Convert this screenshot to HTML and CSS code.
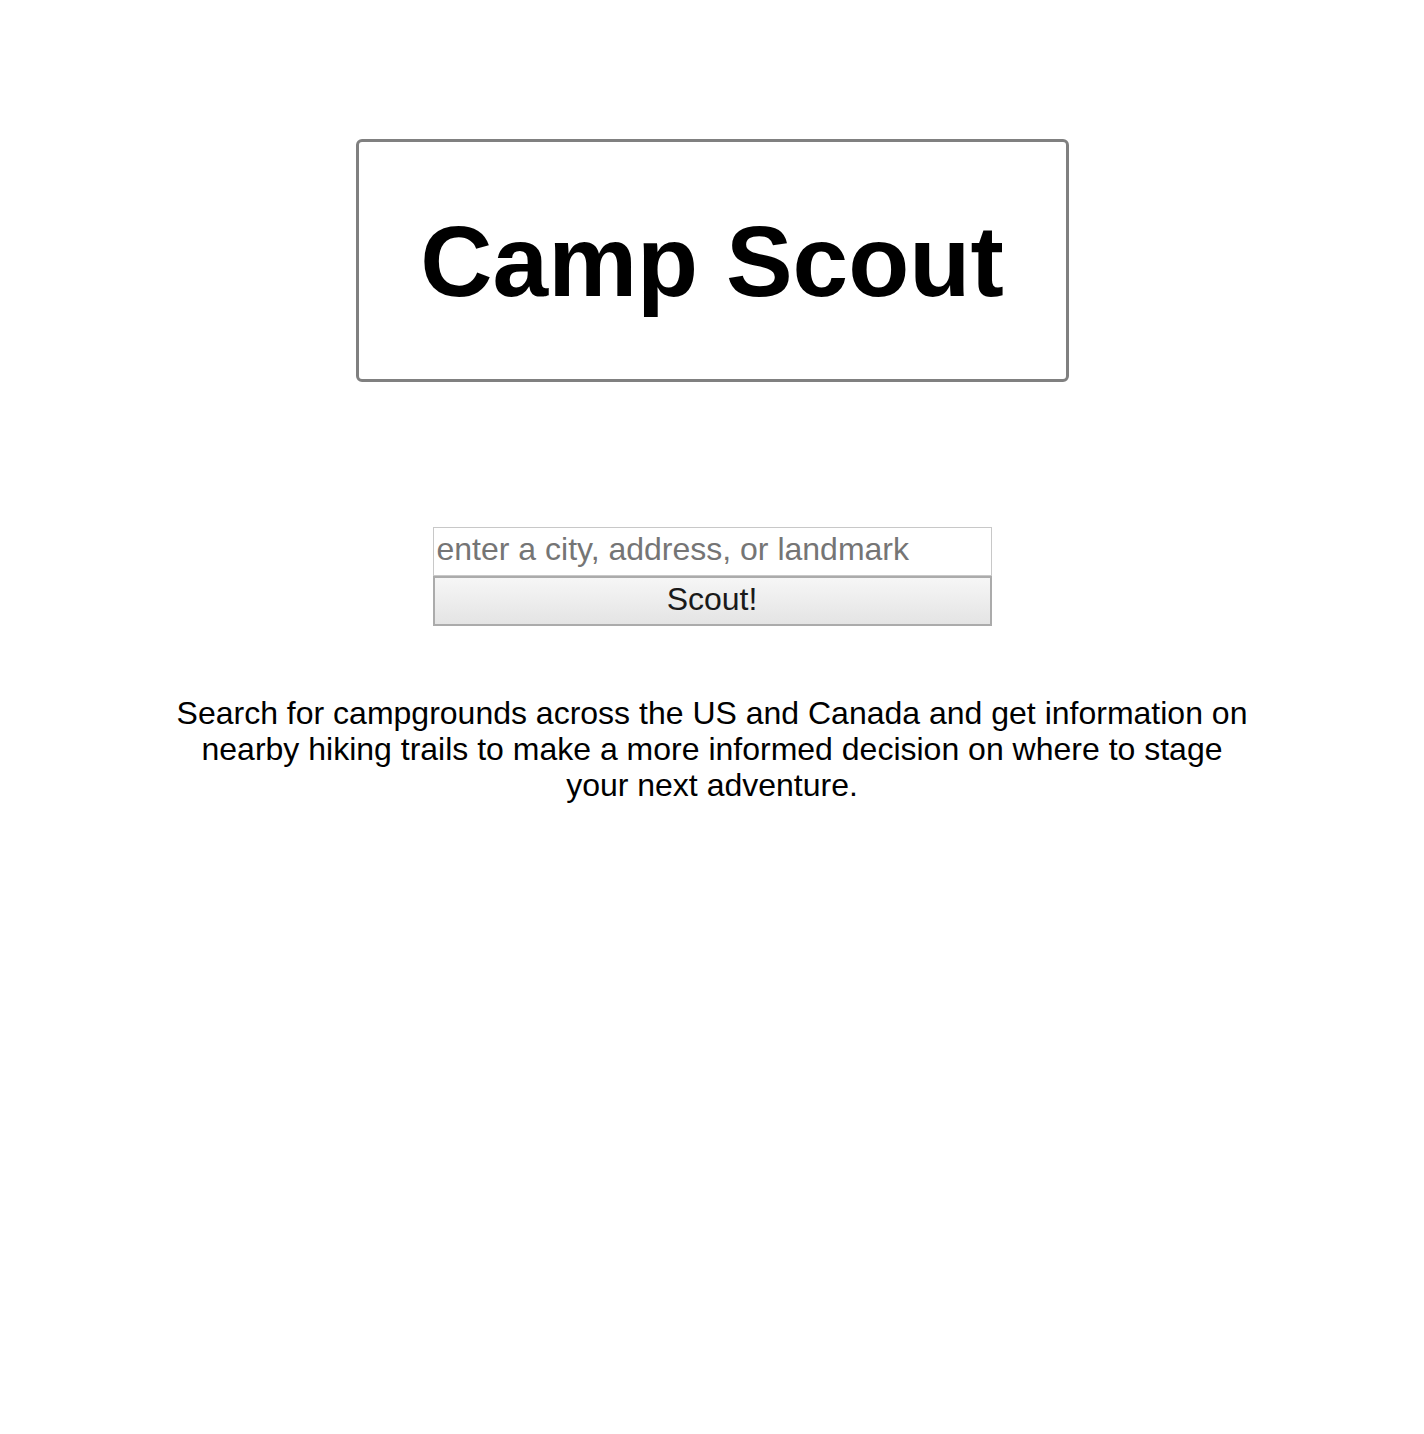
FILE: index.html
```html
<!DOCTYPE html>
<html>
<head>
<meta charset="utf-8">
<title>Camp Scout</title>
<link rel="stylesheet" href="styles.css">
</head>
<body>
<main class="page">
  <header class="title-box">
    <h1 class="title">Camp Scout</h1>
  </header>
  <form class="search">
    <input class="search-input" type="text" placeholder="enter a city, address, or landmark">
    <button class="search-button" type="button">Scout!</button>
  </form>
  <p class="blurb">Search for campgrounds across the US and Canada and get information on nearby hiking trails to make a more informed decision on where to stage your next adventure.</p>
</main>
</body>
</html>
```
FILE: styles.css
```css
html, body {
  margin: 0;
  padding: 0;
  background: #fff;
}
body {
  font-family: "Liberation Sans", Arial, sans-serif;
  color: #000;
}
.page {
  display: flex;
  flex-direction: column;
  align-items: center;
  padding-top: 139px;
}
.title-box {
  box-sizing: border-box;
  width: 713px;
  height: 243px;
  border: 3px solid #808080;
  border-radius: 6px;
  display: flex;
  align-items: center;
  justify-content: center;
}
.title {
  margin: 0;
  font-size: 100px;
  font-weight: bold;
  line-height: 1;
  padding-top: 0;
}
.search {
  margin-top: 145px;
  display: flex;
  flex-direction: column;
  width: 559px;
}
.search-input {
  box-sizing: border-box;
  width: 100%;
  height: 49px;
  margin: 0;
  border: 1px solid #c8c8c8;
  padding: 0 3px 4px;
  font-family: "Liberation Sans", Arial, sans-serif;
  font-size: 32px;
  color: #000;
  outline: none;
}
.search-input::placeholder {
  color: #757575;
}
.search-button {
  box-sizing: border-box;
  width: 100%;
  height: 50px;
  margin: 0;
  border: 2px solid #ababab;
  background: linear-gradient(#f6f6f6, #e4e4e4);
  font-family: "Liberation Sans", Arial, sans-serif;
  font-size: 32px;
  color: #1a1a1a;
  padding: 0 0 4px;
}
.blurb {
  margin: 69px 0 0;
  max-width: 1080px;
  text-align: center;
  font-size: 32px;
  line-height: 36px;
}
```
